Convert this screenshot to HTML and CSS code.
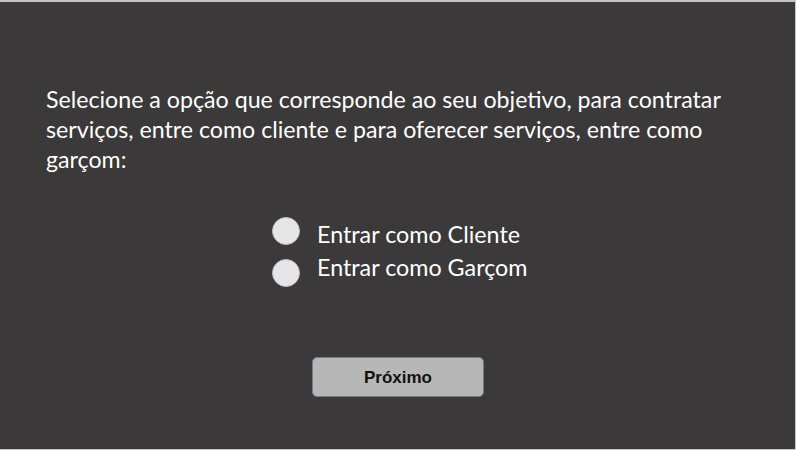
FILE: index.html
```html
<!DOCTYPE html>
<html lang="pt">
<head>
<meta charset="utf-8">
<link rel="stylesheet" href="styles.css">
</head>
<body>
<main class="screen">
  <p class="intro">Selecione a opção que corresponde ao seu objetivo, para contratar serviços, entre como cliente e para oferecer serviços, entre como garçom:</p>
  <div class="options">
    <div class="radios">
      <span class="radio"></span>
      <span class="radio"></span>
    </div>
    <div class="labels">
      <span class="label-text">Entrar como Cliente</span>
      <span class="label-text">Entrar como Garçom</span>
    </div>
  </div>
  <div class="actions">
    <button class="next">Próximo</button>
  </div>
</main>
</body>
</html>
```
FILE: styles.css
```css
html, body {
  margin: 0;
  padding: 0;
  background: #3b3939;
}
.screen {
  box-sizing: border-box;
  width: 796px;
  height: 450px;
  background: #3b3939;
  border-top: 2px solid #c4c4c4;
  border-right: 1px solid #c4c4c4;
  border-bottom: 1px solid #c4c4c4;
  padding: 82px 40px 0 46px;
  display: flex;
  flex-direction: column;
}
.intro {
  margin: 0;
  width: 705px;
  font-family: "Lato", sans-serif;
  font-size: 23.2px;
  line-height: 30px;
  color: #ffffff;
}
.options {
  margin-top: 43px;
  margin-left: 226px;
  display: flex;
  gap: 17px;
}
.radios {
  display: flex;
  flex-direction: column;
  gap: 14px;
}
.labels {
  display: flex;
  flex-direction: column;
  padding-top: 1px;
  font-family: "Lato", sans-serif;
  font-size: 23.3px;
  line-height: 33px;
  color: #ffffff;
}
.radio {
  box-sizing: border-box;
  width: 28px;
  height: 28px;
  border-radius: 50%;
  background: #e6e6e6;
  border: 1px solid #b9bcc4;
}
.actions {
  margin-top: 70px;
  display: flex;
  padding-left: 266px;
}
.next {
  box-sizing: border-box;
  width: 172px;
  height: 40px;
  padding-top: 2px;
  background: #b7b7b7;
  border: 1px solid #737a88;
  border-radius: 5px;
  font-family: "Liberation Sans", Arial, sans-serif;
  font-weight: bold;
  font-size: 17px;
  color: #111;
}
```
